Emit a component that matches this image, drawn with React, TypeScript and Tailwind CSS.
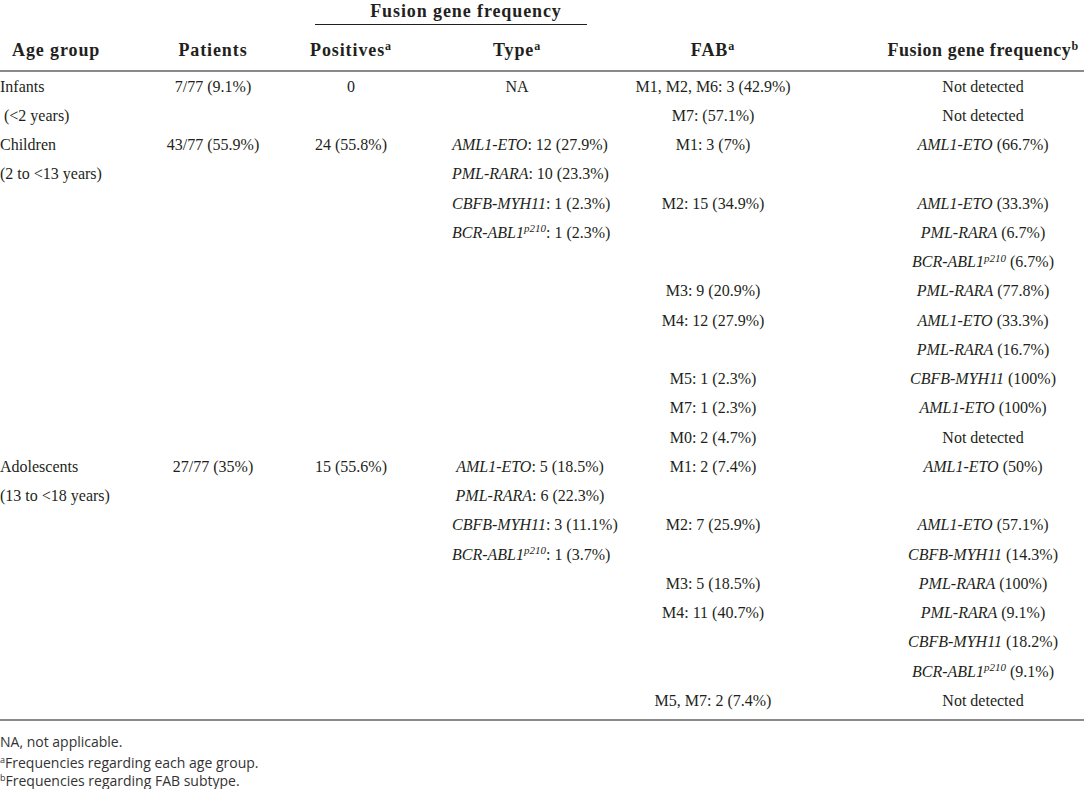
type Gene = { g: string; sup?: string; rest: string };

const G = ({ g, sup, rest }: Gene) => (
  <span>
    <i>{g}</i>
    {sup && <sup className="text-[11px] italic">{sup}</sup>}
    {rest}
  </span>
);

type Row = {
  age?: string;
  pat?: string;
  pos?: string;
  type?: Gene | "NA";
  fab?: string;
  freq?: Gene | string;
};

const rows: Row[] = [
  { age: "Infants", pat: "7/77 (9.1%)", pos: "0", type: "NA", fab: "M1, M2, M6: 3 (42.9%)", freq: "Not detected" },
  { age: "\u00a0(<2 years)", fab: "M7: (57.1%)", freq: "Not detected" },
  { age: "Children", pat: "43/77 (55.9%)", pos: "24 (55.8%)", type: { g: "AML1-ETO", rest: ": 12 (27.9%)" }, fab: "M1: 3 (7%)", freq: { g: "AML1-ETO", rest: " (66.7%)" } },
  { age: "(2 to <13 years)", type: { g: "PML-RARA", rest: ": 10 (23.3%)" } },
  { type: { g: "CBFB-MYH11", rest: ": 1 (2.3%)" }, fab: "M2: 15 (34.9%)", freq: { g: "AML1-ETO", rest: " (33.3%)" } },
  { type: { g: "BCR-ABL1", sup: "p210", rest: ": 1 (2.3%)" }, freq: { g: "PML-RARA", rest: " (6.7%)" } },
  { freq: { g: "BCR-ABL1", sup: "p210", rest: " (6.7%)" } },
  { fab: "M3: 9 (20.9%)", freq: { g: "PML-RARA", rest: " (77.8%)" } },
  { fab: "M4: 12 (27.9%)", freq: { g: "AML1-ETO", rest: " (33.3%)" } },
  { freq: { g: "PML-RARA", rest: " (16.7%)" } },
  { fab: "M5: 1 (2.3%)", freq: { g: "CBFB-MYH11", rest: " (100%)" } },
  { fab: "M7: 1 (2.3%)", freq: { g: "AML1-ETO", rest: " (100%)" } },
  { fab: "M0: 2 (4.7%)", freq: "Not detected" },
  { age: "Adolescents", pat: "27/77 (35%)", pos: "15 (55.6%)", type: { g: "AML1-ETO", rest: ": 5 (18.5%)" }, fab: "M1: 2 (7.4%)", freq: { g: "AML1-ETO", rest: " (50%)" } },
  { age: "(13 to <18 years)", type: { g: "PML-RARA", rest: ": 6 (22.3%)" } },
  { type: { g: "CBFB-MYH11", rest: ": 3 (11.1%)" }, fab: "M2: 7 (25.9%)", freq: { g: "AML1-ETO", rest: " (57.1%)" } },
  { type: { g: "BCR-ABL1", sup: "p210", rest: ": 1 (3.7%)" }, freq: { g: "CBFB-MYH11", rest: " (14.3%)" } },
  { fab: "M3: 5 (18.5%)", freq: { g: "PML-RARA", rest: " (100%)" } },
  { fab: "M4: 11 (40.7%)", freq: { g: "PML-RARA", rest: " (9.1%)" } },
  { freq: { g: "CBFB-MYH11", rest: " (18.2%)" } },
  { freq: { g: "BCR-ABL1", sup: "p210", rest: " (9.1%)" } },
  { fab: "M5, M7: 2 (7.4%)", freq: "Not detected" },
];

const cols = "grid grid-cols-[150px_126px_150px_182px_274px_202px]";

const Sup = ({ c }: { c: string }) => <sup className="text-[12px]">{c}</sup>;

export default function App() {
  return (
    <div className="w-[1084px] h-[789px] bg-white text-[#231f20] overflow-hidden">
      <div className="font-['Liberation_Serif',serif]">
        {/* spanner */}
        <div className={cols}>
          <div className="col-start-3 col-span-2 h-[25px] ml-[39px] mr-[21px] border-b border-[#231f20] pl-[30px] flex items-center justify-center font-bold text-[18px] tracking-[0.05em] leading-none pb-[2px]">
            Fusion gene frequency
          </div>
        </div>
        {/* header */}
        <div className={`${cols} h-[47px] items-center pt-[5px] font-bold text-[18px] tracking-[0.05em] border-b-2 border-[#8a8a8a]`}>
          <div className="pl-[12px]">Age group</div>
          <div className="text-center">Patients</div>
          <div className="text-center">
            Positives<Sup c="a" />
          </div>
          <div className="text-center">
            Type<Sup c="a" />
          </div>
          <div className="text-center pr-[64px]">
            FAB<Sup c="a" />
          </div>
          <div className="text-center whitespace-nowrap tracking-[0.03em]">
            Fusion gene frequency<Sup c="b" />
          </div>
        </div>
        {/* body */}
        <div className="pb-[3px] border-b-2 border-[#8a8a8a] text-[16px]">
          {rows.map((r, i) => (
            <div key={i} className={`${cols} h-[29.25px] items-center whitespace-nowrap`}>
              <div>{r.age}</div>
              <div className="text-center">{r.pat}</div>
              <div className="text-center">{r.pos}</div>
              <div className={r.type === "NA" ? "text-center" : "text-center pl-[26px]"}>
                {r.type === "NA" ? "NA" : r.type ? <G {...r.type} /> : null}
              </div>
              <div className="text-center pr-[64px]">{r.fab}</div>
              <div className="text-center">
                {typeof r.freq === "string" ? r.freq : r.freq ? <G {...r.freq} /> : null}
              </div>
            </div>
          ))}
        </div>
      </div>
      {/* footnotes */}
      <div className="pt-[10px] font-['Open_Sans',sans-serif] text-[14px] leading-[21px] text-[#333]">
        <div>NA, not applicable.</div>
        <div>
          <sup className="text-[9px]">a</sup>Frequencies regarding each age group.
        </div>
        <div className="leading-[16px]">
          <sup className="text-[9px]">b</sup>Frequencies regarding FAB subtype.
        </div>
      </div>
    </div>
  );
}
